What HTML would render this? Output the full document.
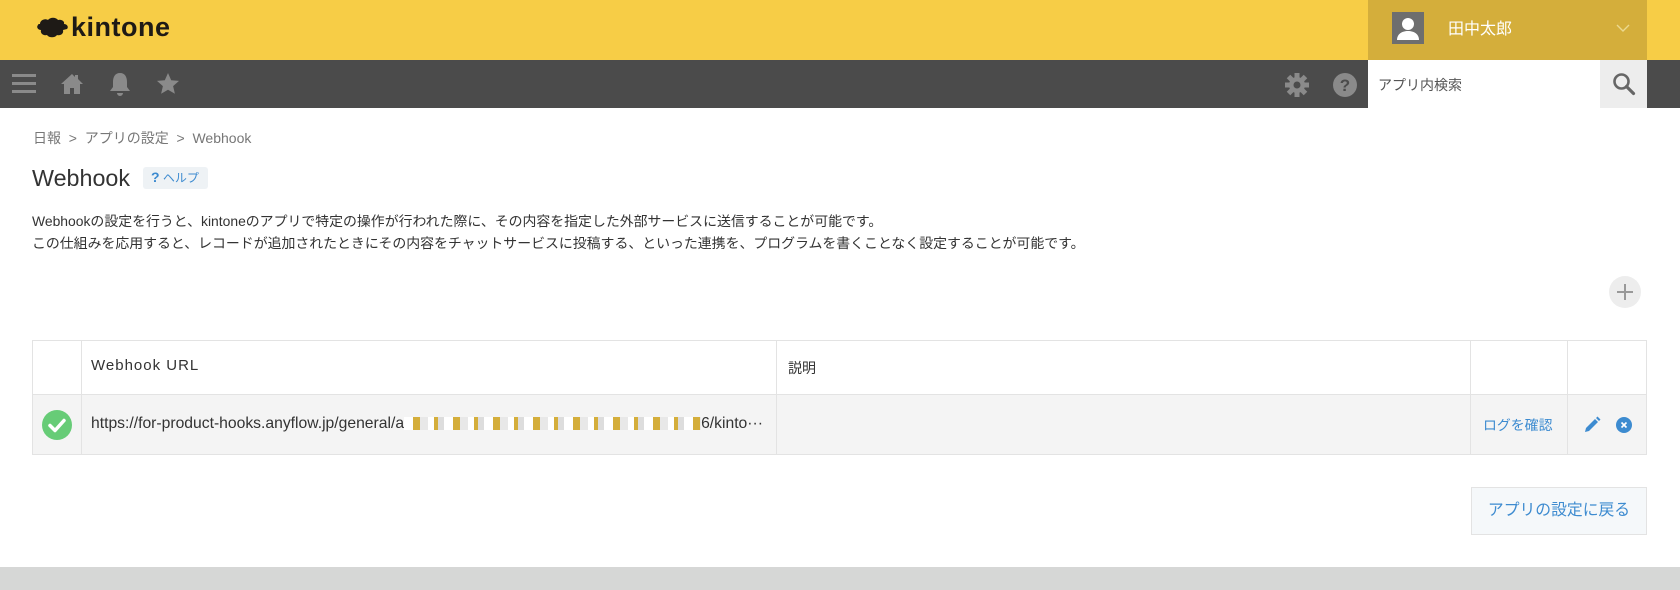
<!DOCTYPE html>
<html><head><meta charset="utf-8"><style>
*{margin:0;padding:0;box-sizing:border-box}
body{width:1680px;height:590px;overflow:hidden;background:#fff;font-family:"Liberation Sans","Noto Sans CJK JP",sans-serif;color:#333;position:relative}
.abs{position:absolute}
</style></head><body>
<div class="abs" style="left:0;top:0;width:1680px;height:60px;background:#f7cd46"></div>
<div class="abs" style="left:0;top:60px;width:1680px;height:48px;background:#4b4b4b"></div>
<svg class="abs" style="left:34px;top:14px" width="36" height="28" viewBox="0 0 36 28"><path d="M6 10c0-4 5-6 8-4 2-3 8-3 10 0 3-1 7 1 6 4 3 0 5 3 3 5l-4 1c1 4-3 6-6 5-2 3-8 3-10 0-4 1-7-2-6-5-3 0-5-3-3-5 0-1 1-1 2-1z" fill="#1e1a16"/></svg>
<div class="abs" style="left:71px;top:12px;font-size:27px;font-weight:bold;color:#1e1a16;letter-spacing:0.5px">kintone</div>
<div class="abs" style="left:12px;top:74px;width:24px;height:3px;background:#8a8a8a;box-shadow:0 8px 0 #8a8a8a,0 16px 0 #8a8a8a"></div>
<svg class="abs" style="left:60px;top:72px" width="24" height="24" viewBox="0 0 24 24"><path d="M12 2L1 12h3v10h6v-6h4v6h6V12h3L18 7V3h-3v2z" fill="#8a8a8a"/></svg>
<svg class="abs" style="left:108px;top:72px" width="24" height="26" viewBox="0 0 24 26"><path d="M12 1c-5 0-7 4-7 9v5l-3 4h20l-3-4v-5c0-5-2-9-7-9zM9 21a3 3 0 006 0z" fill="#8a8a8a"/></svg>
<svg class="abs" style="left:156px;top:72px" width="24" height="24" viewBox="0 0 24 24"><path d="M12 1l3.2 7.2 7.8.7-5.9 5.2 1.8 7.7L12 17.8 5.1 21.8l1.8-7.7L1 8.9l7.8-.7z" fill="#8a8a8a"/></svg>
<svg class="abs" style="left:1284px;top:72px" width="26" height="26" viewBox="0 0 26 26"><g fill="#8a8a8a"><circle cx="13" cy="13" r="8"/><rect x="10.5" y="1" width="5" height="24"/><rect x="10.5" y="1" width="5" height="24" transform="rotate(45 13 13)"/><rect x="10.5" y="1" width="5" height="24" transform="rotate(90 13 13)"/><rect x="10.5" y="1" width="5" height="24" transform="rotate(135 13 13)"/></g><circle cx="13" cy="13" r="3.5" fill="#4b4b4b"/></svg>
<svg class="abs" style="left:1332px;top:72px" width="26" height="26" viewBox="0 0 26 26"><circle cx="13" cy="13" r="12" fill="#8a8a8a"/><text x="13" y="19" font-size="17" font-weight="bold" text-anchor="middle" fill="#4b4b4b" font-family="Liberation Sans">?</text></svg>
<div class="abs" style="left:1368px;top:0;width:279px;height:60px;background:#d4ae3b"></div>
<div class="abs" style="left:1392px;top:12px;width:32px;height:32px;background:#6e6e6e"></div>
<svg class="abs" style="left:1392px;top:12px" width="32" height="32" viewBox="0 0 32 32"><circle cx="16" cy="12" r="6" fill="#fff"/><path d="M5 28c0-6 5-9 11-9s11 3 11 9z" fill="#fff"/></svg>
<div class="abs" style="left:1448px;top:15px;font-size:16px;color:#fff">田中太郎</div>
<svg class="abs" style="left:1616px;top:24px" width="14" height="9" viewBox="0 0 14 9"><path d="M1 1l6 6 6-6" stroke="#ecd98f" stroke-width="1.4" fill="none"/></svg>
<div class="abs" style="left:1368px;top:60px;width:232px;height:48px;background:#fff"></div>
<div class="abs" style="left:1378px;top:75px;font-size:14px;color:#555">アプリ内検索</div>
<div class="abs" style="left:1600px;top:60px;width:47px;height:48px;background:#ededed"></div>
<svg class="abs" style="left:1612px;top:72px" width="24" height="24" viewBox="0 0 24 24"><circle cx="9.5" cy="9.5" r="7" stroke="#666" stroke-width="2.6" fill="none"/><path d="M14.5 14.5l7 7" stroke="#666" stroke-width="3.2" stroke-linecap="round"/></svg>
<div class="abs" style="left:33px;top:128px;font-size:14px;color:#777">日報 &nbsp;&gt;&nbsp; アプリの設定 &nbsp;&gt;&nbsp; Webhook</div>
<div class="abs" style="left:32px;top:165px;font-size:23.3px;color:#333">Webhook</div>
<div class="abs" style="left:143px;top:167px;width:65px;height:22px;background:#eef2f5;border-radius:3px;font-size:12px;color:#3d8bd0;padding:2px 0 0 8px"><b style="font-size:14px">?</b> ヘルプ</div>
<div class="abs" style="left:32px;top:210px;font-size:13.9px;line-height:22px;color:#333;white-space:nowrap">Webhookの設定を行うと、kintoneのアプリで特定の操作が行われた際に、その内容を指定した外部サービスに送信することが可能です。<br>この仕組みを応用すると、レコードが追加されたときにその内容をチャットサービスに投稿する、といった連携を、プログラムを書くことなく設定することが可能です。</div>
<svg class="abs" style="left:1608px;top:275px" width="34" height="34" viewBox="0 0 34 34"><circle cx="17" cy="17" r="16" fill="#ededed"/><path d="M17 9v16M9 17h16" stroke="#999" stroke-width="2"/></svg>
<div class="abs" style="left:32px;top:340px;width:1615px;height:115px;border:1px solid #e3e3e3"></div>
<div class="abs" style="left:33px;top:394px;width:1613px;height:60px;background:#f4f4f4;border-top:1px solid #e3e3e3"></div>
<div class="abs" style="left:81px;top:341px;width:1px;height:113px;background:#e3e3e3"></div>
<div class="abs" style="left:776px;top:341px;width:1px;height:113px;background:#e3e3e3"></div>
<div class="abs" style="left:1470px;top:341px;width:1px;height:113px;background:#e3e3e3"></div>
<div class="abs" style="left:1567px;top:341px;width:1px;height:113px;background:#e3e3e3"></div>
<div class="abs" style="left:91px;top:357px;font-size:15px;letter-spacing:1px;color:#333">Webhook URL</div>
<div class="abs" style="left:788px;top:358px;font-size:14px;color:#333">説明</div>
<svg class="abs" style="left:41px;top:409px" width="32" height="32" viewBox="0 0 32 32"><circle cx="16" cy="16" r="15" fill="#67cc77"/><path d="M9 16.5l5 5 9-10" stroke="#fff" stroke-width="3.5" fill="none" stroke-linecap="round" stroke-linejoin="round"/></svg>
<div class="abs" style="left:91px;top:415px;font-size:15.7px;color:#333;white-space:nowrap">https://for-product-hooks.anyflow.jp/general/a<span style="display:inline-block;width:297px;height:13px;background:repeating-linear-gradient(90deg,#fff 0 9px,#d4ae3b 9px 16px,#e8e8e8 16px 24px,#fff 24px 30px,#d4ae3b 30px 34px,#ddd 34px 40px);vertical-align:middle"></span>6/kinto···</div>
<div class="abs" style="left:1483px;top:415px;font-size:13.9px;color:#3d8bd0">ログを確認</div>
<svg class="abs" style="left:1582px;top:415px" width="20" height="20" viewBox="0 0 20 20"><path d="M3 17l1-4 9-9 3 3-9 9z M14 3l1.5-1.5 3 3L17 6z" fill="#3d8bd0"/></svg>
<svg class="abs" style="left:1615px;top:416px" width="18" height="18" viewBox="0 0 18 18"><circle cx="9" cy="9" r="8" fill="#3d8bd0"/><path d="M6.5 6.5l5 5M11.5 6.5l-5 5" stroke="#fff" stroke-width="1.6"/></svg>
<div class="abs" style="left:1471px;top:487px;width:176px;height:48px;background:#f5f8fa;border:1px solid #e3e3e3;font-size:15.8px;color:#3d8bd0;text-align:center;line-height:46px">アプリの設定に戻る</div>
<div class="abs" style="left:0;top:567px;width:1680px;height:23px;background:#d6d7d6"></div>
</body></html>
